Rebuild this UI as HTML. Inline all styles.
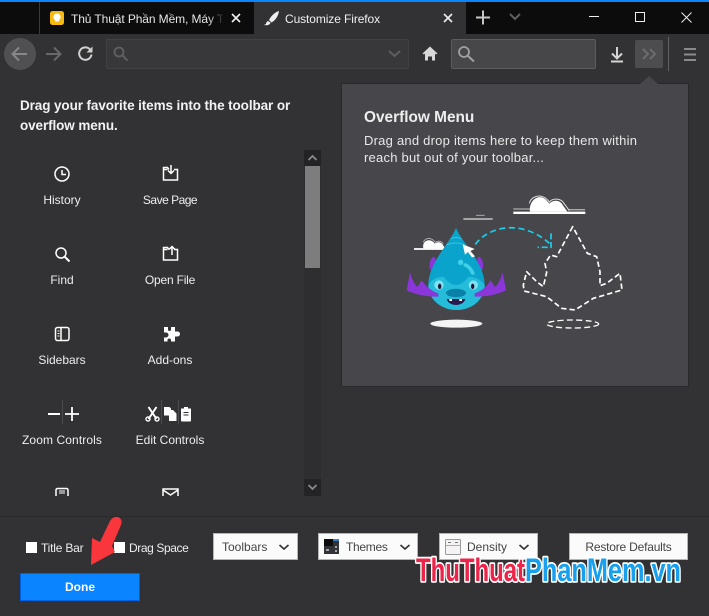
<!DOCTYPE html>
<html><head><meta charset="utf-8">
<style>
html,body{margin:0;padding:0;background:#323234}
#r{position:relative;width:709px;height:616px;overflow:hidden;background:#323234;font-family:"Liberation Sans","Noto Sans CJK SC",sans-serif;color:#f2f2f2}
.a{position:absolute}
.t{position:absolute;white-space:nowrap;font-size:12px;line-height:14px;color:#eee}
.c{text-align:center;width:108px}
.b{position:absolute;background:#fbfbfb;border:1px solid #b5b5b5;box-sizing:border-box;height:27px;color:#444;font-size:12px;line-height:26px;white-space:nowrap}
svg{position:absolute;left:0;top:0}
</style></head><body>
<div id="r">
<div class="a" style="left:0;top:0;width:709px;height:34px;background:#0c0c0d"></div>
<div class="a" style="left:254px;top:2px;width:212px;height:32px;background:#323234"></div>
<div class="a" style="left:0;top:0;width:709px;height:2px;background:#0a84ff"></div>
<div class="a" style="left:39px;top:2px;width:1px;height:32px;background:#3a3a3c"></div>
<div class="t" style="left:71px;top:12px;width:152px;overflow:hidden;color:#e6e6e6;letter-spacing:-.1px">Thủ Thuật Phần Mềm, Máy Tí</div>
<div class="a" style="left:208px;top:10px;width:16px;height:20px;background:linear-gradient(90deg,rgba(12,12,13,0),#0c0c0d)"></div>
<div class="t" style="left:285px;top:12px;color:#f0f0f0;letter-spacing:-.1px">Customize Firefox</div>

<div class="a" style="left:106px;top:39px;width:303px;height:30px;box-sizing:border-box;background:#38383a;border:1px solid #414143;border-radius:2px"></div>
<div class="a" style="left:451px;top:39px;width:145px;height:30px;box-sizing:border-box;background:#474749;border:1px solid #5c5c5e;border-radius:2px"></div>
<div class="a" style="left:635px;top:40px;width:28px;height:28px;background:#4d4d4f;border-radius:2px"></div>
<div class="a" style="left:668px;top:37px;width:1px;height:34px;background:#606062"></div>
<div class="a" style="left:4px;top:38px;width:32px;height:32px;border-radius:50%;background:#505052"></div>

<div class="a" style="left:341px;top:83px;width:348px;height:304px;box-sizing:border-box;background:#47474b;border:1px solid #29292b"></div>
<div class="t" style="left:364px;top:109px;font-size:15.4px;line-height:18px;font-weight:bold;color:#eee">Overflow Menu</div>
<div class="t" style="left:364px;top:132px;font-size:13px;line-height:17px;color:#e8e8e8;letter-spacing:.23px">Drag and drop items here to keep them within<br>reach but out of your toolbar...</div>
<div class="t" style="left:20px;top:96px;line-height:20px;font-size:13.5px;font-weight:bold;color:#f2f2f2;letter-spacing:-.1px">Drag your favorite items into the toolbar or<br>overflow menu.</div>

<div class="t c" style="left:8px;top:193px">History</div>
<div class="t c" style="left:116px;top:193px;letter-spacing:-.5px">Save Page</div>
<div class="t c" style="left:8px;top:273px">Find</div>
<div class="t c" style="left:116px;top:273px;letter-spacing:-.2px">Open File</div>
<div class="t c" style="left:8px;top:353px">Sidebars</div>
<div class="t c" style="left:116px;top:353px">Add-ons</div>
<div class="t c" style="left:8px;top:433px;letter-spacing:.1px">Zoom Controls</div>
<div class="t c" style="left:116px;top:433px">Edit Controls</div>

<div class="a" style="left:304px;top:150px;width:17px;height:346px;background:#2e2e30"></div>
<div class="a" style="left:304px;top:150px;width:17px;height:16px;background:#232325"></div>
<div class="a" style="left:304px;top:479px;width:17px;height:17px;background:#232325"></div>
<div class="a" style="left:305px;top:166px;width:15px;height:102px;background:#7d7d7d"></div>

<div class="a" style="left:0;top:516px;width:709px;height:1px;background:#29292b"></div>
<div class="a" style="left:26px;top:542px;width:11px;height:11px;background:#fff"></div>
<div class="t" style="left:41px;top:541px;letter-spacing:-.2px">Title Bar</div>
<div class="a" style="left:114px;top:542px;width:11px;height:11px;background:#fff"></div>
<div class="t" style="left:129px;top:541px;letter-spacing:-.4px">Drag Space</div>
<div class="b" style="left:213px;top:533px;width:85px;padding-left:8px">Toolbars</div>
<div class="b" style="left:318px;top:533px;width:100px;padding-left:27px;letter-spacing:-.3px">Themes</div>
<div class="b" style="left:439px;top:533px;width:99px;padding-left:27px">Density</div>
<div class="b" style="left:569px;top:533px;width:119px;text-align:center;letter-spacing:-.2px">Restore Defaults</div>
<div class="a" style="left:20px;top:573px;width:120px;height:28px;box-sizing:border-box;background:#0a84ff;border:1px solid #0060df;color:#fff;font-size:12px;font-weight:bold;line-height:27px;text-align:center">Done</div>

<svg width="709" height="616" viewBox="0 0 709 616" fill="none">
<!-- favicon -->
<rect x="50" y="11" width="14" height="14" rx="2.5" fill="#f6b90f"/>
<path d="M57 13.500a3.600 3.600 0 0 1 2 6.600v1.400h-4v-1.400a3.600 3.600 0 0 1 2-6.600z" fill="#fff"/>
<!-- tab close -->
<path d="M232 14l8 8M240 14l-8 8" stroke="#eee" stroke-width="1.600"/>
<path d="M444 14l8 8M452 14l-8 8" stroke="#eee" stroke-width="1.600"/>
<!-- brush -->
<path d="M279 11c-4 1-8 5-10 9l2.500 2.500c4-2 7-7 7.500-11.500z" fill="#eee"/>
<path d="M268 21c-1.500 .5-2 2-2 3l-2 1c2 .5 6 .5 6.500-2.500z" fill="#eee"/>
<!-- new tab, dropdown -->
<path d="M483 10.500v14M476 17.500h14" stroke="#c8c8c8" stroke-width="2"/>
<path d="M510 14l5 5 5-5" stroke="#5f5f61" stroke-width="2"/>
<!-- window controls -->
<path d="M589 16.500h10" stroke="#eee" stroke-width="1"/>
<rect x="635.500" y="12.500" width="9" height="9" stroke="#eee" stroke-width="1"/>
<path d="M681.500 12.500l10 10M691.500 12.500l-10 10" stroke="#eee" stroke-width="1"/>
<!-- nav -->
<path d="M27 54H13M19 47.500L12.500 54l6.500 6.500" stroke="#87878a" stroke-width="2"/>
<path d="M46 54h14M54 47.500l6.500 6.500-6.500 6.500" stroke="#68686a" stroke-width="2"/>
<path d="M91.500 54.500a6.200 6.200 0 1 1-1.500-5" stroke="#d0d0d0" stroke-width="2"/>
<path d="M92.500 46.500v6h-6z" fill="#d0d0d0"/>
<!-- search icons -->
<circle cx="119" cy="52" r="4.500" stroke="#606062" stroke-width="1.800"/><path d="M122.500 55.500l5 5" stroke="#606062" stroke-width="2"/>
<path d="M389 51l5.500 5 5.500-5" stroke="#5e5e60" stroke-width="2"/>
<path d="M430 46.500l-7.500 7 1.500 1 1-1v7h3v-4h4v4h3v-7l1 1 1.500-1z" fill="#d8d8d8"/>
<circle cx="464" cy="52" r="5" stroke="#a0a0a2" stroke-width="1.800"/><path d="M468 56l6 5.500" stroke="#a0a0a2" stroke-width="2"/>
<!-- download -->
<path d="M617 47v11M612 53.500l5 5 5-5" stroke="#d4d4d4" stroke-width="2"/><path d="M611 61.500h12" stroke="#d4d4d4" stroke-width="2"/>
<!-- overflow -->
<path d="M643 49l5 5-5 5M650 49l5 5-5 5" stroke="#6c6c6f" stroke-width="2"/>
<path d="M684 49h12M684 54.500h12M684 60h12" stroke="#8a8a8c" stroke-width="2"/>
<!-- panel arrow -->
<path d="M640 84l9-8 9 8z" fill="#47474b"/>
<!-- scroll arrows -->
<path d="M308.500 160l4-4 4 4" stroke="#8a8a8a" stroke-width="1.800"/>
<path d="M308.500 485l4 4 4-4" stroke="#8a8a8a" stroke-width="1.800"/>
<!-- palette icons -->
<g stroke="#fff" stroke-width="1.500">
<circle cx="62" cy="174" r="7"/><path d="M62 170v4.500h4"/>
<path d="M163 169.500h4.500M174 169.500h3.500v10.500h-14v-12.500h4l1.500 2"/><path d="M171 165v8M168 170.500l3 3 3-3"/>
<circle cx="61" cy="253" r="5"/><path d="M64.500 256.500l5 5" stroke-width="2"/>
<path d="M163 249.500h4.500M174 249.500h3.500v10.500h-14v-12.500h4l1.500 2"/><path d="M172 255v-8M169 249.500l3-3 3 3"/>
<rect x="55.500" y="327.500" width="13.500" height="13" rx="2"/><path d="M61 328v12.500" stroke-width="1.500"/><path d="M57.500 331h2M57.500 333.500h2M57.500 336h2" stroke-width="1"/>
<path d="M48 414h12" stroke-width="2"/><path d="M65 414h14M72 407v14" stroke-width="1.800"/>
<path d="M62.500 400v24" stroke="#4c4c4e" stroke-width="1"/>
<path d="M161.500 400v24M178.500 400v24" stroke="#4c4c4e" stroke-width="1"/>
<path d="M148.500 407l8 12M156.500 407l-8 12" stroke-width="2"/>
<path d="M56 496v-6a1.500 1.500 0 0 1 1.500-1.500h9a1.500 1.500 0 0 1 1.500 1.500v6"/>
<path d="M59 493h6M59 491h6" stroke-width="1"/>
<path d="M163 496v-7h15v7M163 490l7.500 5 7.500-5"/>
</g>
<path d="M164 327h4v2.500a1.500 1.500 0 0 0 3 0V327h4v4.500h2.500a2 2 0 0 1 0 5H175v5h-4v-2a2 2 0 0 0-3.500 0v2h-3.500v-4h2a2.500 2.500 0 0 0 0-5h-2z" fill="#fff"/>
<circle cx="148" cy="419" r="2" stroke="#fff" stroke-width="1.400"/><circle cx="157" cy="419" r="2" stroke="#fff" stroke-width="1.400"/>
<path d="M164 407h5.500l1.500 1.500v1.500h2l3.500 3.500v7.500h-7.500v-5.500h-5z" fill="#fff"/>
<path d="M181 408.500h3v-1.500h4v1.500h3v12a1 1 0 0 1-1 1h-8a1 1 0 0 1-1-1z" fill="#fff"/>
<path d="M183.500 412.500h5M183.500 415h5" stroke="#323234" stroke-width="1"/>
<!-- selects -->
<path d="M279.500 545l4.500 4 4.500-4" stroke="#333" stroke-width="1.600"/>
<path d="M400.500 545l4.500 4 4.500-4" stroke="#333" stroke-width="1.600"/>
<path d="M519.500 545l4.500 4 4.500-4" stroke="#333" stroke-width="1.600"/>
<rect x="324" y="539" width="15" height="15" fill="#33333a"/>
<rect x="324" y="539" width="9" height="7" fill="#0d0d0d"/><rect x="333" y="539" width="6" height="2" fill="#3d7fc0"/>
<path d="M326 550h3M335 547h2M335 551h2" stroke="#ccc" stroke-width="1.500"/>
<rect x="445.500" y="539.500" width="15" height="15" rx="1" fill="#f4f4f4" stroke="#9a9a9a"/>
<path d="M446 545.500h14" stroke="#aaa"/><path d="M448 542.500h3M455 542.500h3" stroke="#777"/>
<!-- illustration -->
<g transform="translate(380 185) scale(.33333)">
<path d="M400 80h216v7H400z" fill="#fff"/><path d="M400 72h50M565 74h50" stroke="#aaa" stroke-width="4"/>
<path d="M450 80c-4-30 20-50 38-42 10 4 16 14 20 18 12-14 34-10 40 4l14 20z" fill="#fff"/>
<path d="M448 55c4-16 22-26 40-20 10 4 16 10 20 16 12-14 36-10 44 4l16 22" stroke="#ddd" stroke-width="3"/>
<path d="M250 102h88" stroke="#ddd" stroke-width="4"/><path d="M288 91h26" stroke="#aaa" stroke-width="3"/>
<path d="M102 192h94" stroke="#fff" stroke-width="5"/>
<path d="M130 190c-4-18 10-26 20-24 8 2 12 6 14 10 10-8 22-4 26 6l6 8z" fill="#fff"/>
<path d="M130 172c4-10 14-14 24-10 6 2 10 8 12 10 8-6 18-4 24 4" stroke="#bbb" stroke-width="2.500"/>
<path d="M160 214c-14 14-16 36-2 48 8 4 14-2 12-10-6-10-6-22-2-30z" fill="#8a36d8"/>
<path d="M298 214c14 14 16 36 2 48-8 4-14-2-12-10 6-10 6-22 2-30z" fill="#8a36d8"/>
<path d="M228 128C214 170 145 232 145 300c0 44 40 75 85 75s84-31 84-75c0-68-72-130-86-172z" fill="#0aa3cc"/>
<path d="M145 300c0 44 40 75 85 75s84-31 84-75c-14-20-34-26-50-24-8 14-24 24-36 24s-28-10-36-24c-16-2-34 4-47 24z" fill="#24bcd9"/>
<path d="M90 262L80 316Q120 335 175 335L175 325Q145 315 125 286L112 306Q98 292 90 262z" fill="#8a36d8"/>
<path d="M368 262L378 316Q338 335 284 335L284 325Q314 315 332 286L345 306Q360 292 368 262z" fill="#8a36d8"/>
<circle cx="177" cy="300" r="14" fill="#7fe0ee"/><circle cx="280" cy="300" r="14" fill="#7fe0ee"/>
<ellipse cx="179" cy="304" rx="5" ry="8" fill="#20123a"/><ellipse cx="278" cy="304" rx="5" ry="8" fill="#20123a"/>
<path d="M198 322c6-14 54-14 60 0 0 8-8 14-30 14s-30-6-30-14z" fill="#0a7fa8"/>
<path d="M200 342h56c-2 10-14 18-28 18s-26-8-28-18z" fill="#2a1b4e"/>
<path d="M208 342h8v6h-8zM238 342h8v6h-8z" fill="#fff"/>
<circle cx="242" cy="232" r="8" fill="#3fd0e8"/><path d="M256 240c8 2 18 14 22 24" stroke="#3fd0e8" stroke-width="11" stroke-linecap="round"/>
<path d="M212 162c10-6 22-6 32 0M200 180c16-8 40-8 54 0" stroke="#3ac4e0" stroke-width="3"/>
<path d="M248 178l36 14-13 6 14 16-9 3-12-16-9 8z" fill="#fff"/>
<path d="M286 178C330 120 430 105 508 175" stroke="#1ad0ec" stroke-width="5" stroke-dasharray="18 11"/>
<path d="M513 145v42h-40" stroke="#1ad0ec" stroke-width="5" stroke-dasharray="18 8"/>
<path d="M578 125L530 215L512 210L495 235L500 262L490 305L470 290L440 260L430 300L432 318L500 335L545 370L585 375L640 340L726 315L720 265L680 295L660 302L660 260L650 215L622 205z" stroke="#fff" stroke-width="5" stroke-dasharray="16 9" stroke-linejoin="round"/>
<ellipse cx="229" cy="416" rx="78" ry="12" fill="#f4f4f4"/>
<ellipse cx="578" cy="417" rx="78" ry="12" stroke="#fff" stroke-width="4" stroke-dasharray="18 10"/>
</g>
<!-- red arrow -->
<path d="M91 565L92 538L100 542L110 521Q113 516 118 517Q123 519 121 525L112 546L115 552z" fill="#f8363c"/>
<!-- watermark -->
<g font-family="Liberation Sans,sans-serif" font-weight="bold" font-size="32" stroke="#fff" stroke-width="3.500" paint-order="stroke" stroke-linejoin="round">
<text x="416" y="581" textLength="109" lengthAdjust="spacingAndGlyphs" fill="#ec2449">ThuThuat</text>
<text x="525" y="581" textLength="156" lengthAdjust="spacingAndGlyphs" fill="#18a0ee">PhanMem.vn</text>
</g>
</svg>
</div>
</body></html>
